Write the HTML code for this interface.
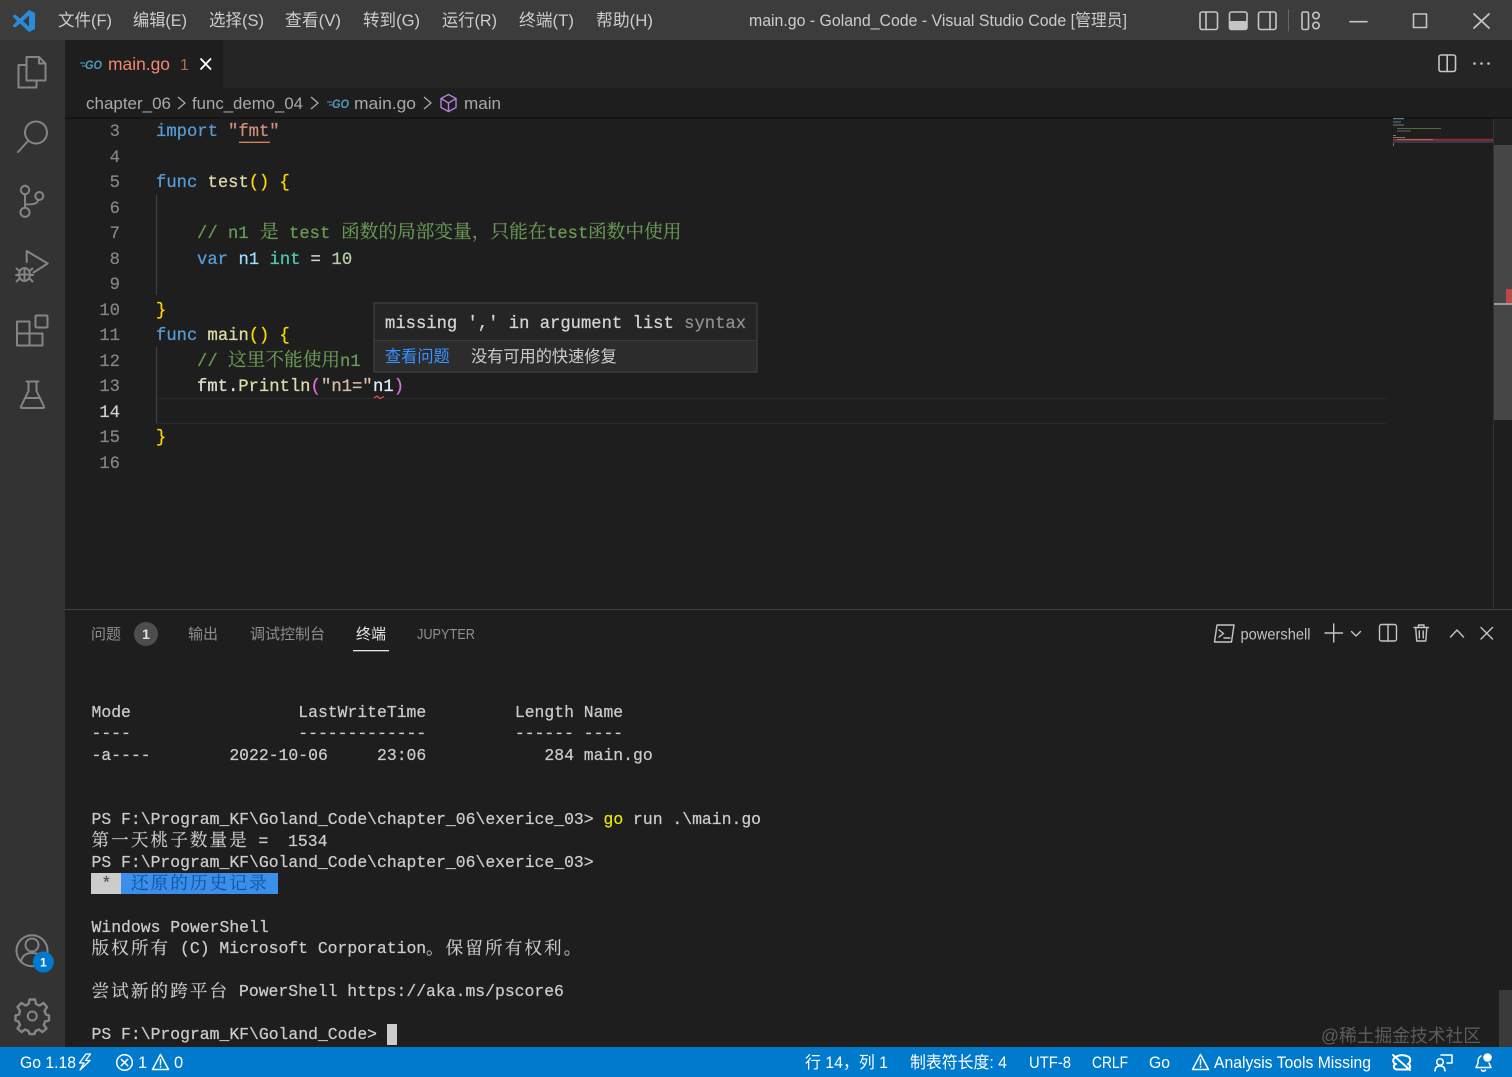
<!DOCTYPE html>
<html lang="zh">
<head>
<meta charset="utf-8">
<title>main.go - Goland_Code - Visual Studio Code</title>
<style>
html,body{margin:0;padding:0;background:#1e1e1e;width:1512px;height:1077px;overflow:hidden}
svg{display:block;position:absolute;left:0;top:0}
text{white-space:pre}
.ui{font-family:"Liberation Sans","Noto Sans CJK SC",sans-serif}
.m{font-family:"Liberation Mono","Noto Sans CJK SC",monospace;font-size:17.2px;stroke-width:.25px}
.t{font-family:"Liberation Mono","Noto Serif CJK SC",monospace;font-size:16.42px;fill:#cccccc;stroke:#cccccc;stroke-width:.22px}
.tc{font-family:"Noto Serif CJK SC","Noto Sans CJK SC",serif;font-size:17.6px;letter-spacing:2.08px;fill:#cccccc;stroke:#cccccc;stroke-width:.15px}
.cc{font-family:"Noto Serif CJK SC","Noto Sans CJK SC",serif;font-size:18.7px;fill:#6a9955;stroke:#6a9955;stroke-width:.15px}
.n{font-family:"Liberation Mono",monospace;font-size:17.2px;fill:#858585;stroke:#858585;stroke-width:.2px;text-anchor:end}
.menu{font-size:17px;fill:#cccccc}
.bc{font-size:17px;fill:#a9a9a9}
.pt{font-size:15px;fill:#8f8f8f}
.st{font-size:16.5px;fill:#ffffff}
.ic{fill:none;stroke:#858585;stroke-width:2;stroke-linejoin:round;stroke-linecap:round}
.tb{fill:none;stroke:#c5c5c5;stroke-width:1.6;stroke-linejoin:round;stroke-linecap:round}
.sw{fill:none;stroke:#ffffff;stroke-width:1.5;stroke-linejoin:round;stroke-linecap:round}
.k{fill:#569cd6;stroke:#569cd6}.f{fill:#dcdcaa;stroke:#dcdcaa}.y{fill:#ffd700;stroke:#ffd700}.s{fill:#ce9178;stroke:#ce9178}.v{fill:#9cdcfe;stroke:#9cdcfe}.i{fill:#4ec9b0;stroke:#4ec9b0}.w{fill:#d4d4d4;stroke:#d4d4d4}.d{fill:#b5cea8;stroke:#b5cea8}.g{fill:#6a9955;stroke:#6a9955}.p{fill:#da70d6;stroke:#da70d6}
.go{font-family:"Liberation Sans",sans-serif;font-size:12px;font-weight:700;font-style:italic;fill:#519aba}
</style>
</head>
<body>
<svg width="1512" height="1077" viewBox="0 0 1512 1077" xmlns="http://www.w3.org/2000/svg">
<!-- backgrounds -->
<rect x="0" y="0" width="1512" height="1077" fill="#1e1e1e"/>
<rect x="0" y="0" width="1512" height="40" fill="#3c3c3c"/>
<rect x="0" y="40" width="65" height="1007" fill="#333333"/>
<rect x="65" y="40" width="1447" height="48" fill="#252526"/>
<rect x="65" y="40" width="158" height="48" fill="#1e1e1e"/>
<rect x="65" y="117" width="1447" height="2" fill="#151515"/>
<rect x="0" y="1047" width="1512" height="30" fill="#007acc"/>

<!-- title bar -->
<path fill="#2b8bd8" fill-rule="evenodd" d="M29 10L20 18.5 15 14.5 12.5 16 17 21 12.5 26 15 27.5 20 23.5 29 32 35 29V13ZM29 15.5L23 21 29 26.5Z"/>
<g class="ui menu">
<text x="58" y="26" textLength="54" lengthAdjust="spacingAndGlyphs">文件(F)</text>
<text x="133" y="26" textLength="54" lengthAdjust="spacingAndGlyphs">编辑(E)</text>
<text x="209" y="26" textLength="55" lengthAdjust="spacingAndGlyphs">选择(S)</text>
<text x="285" y="26" textLength="56" lengthAdjust="spacingAndGlyphs">查看(V)</text>
<text x="363" y="26" textLength="57" lengthAdjust="spacingAndGlyphs">转到(G)</text>
<text x="442" y="26" textLength="55" lengthAdjust="spacingAndGlyphs">运行(R)</text>
<text x="519" y="26" textLength="55" lengthAdjust="spacingAndGlyphs">终端(T)</text>
<text x="596" y="26" textLength="57" lengthAdjust="spacingAndGlyphs">帮助(H)</text>
<text x="749" y="26" textLength="378" lengthAdjust="spacingAndGlyphs">main.go - Goland_Code - Visual Studio Code [管理员]</text>
</g>
<g class="tb">
<rect x="1200" y="12" width="17.5" height="17.5" rx="2"/><path d="M1206 12V29.5"/>
<rect x="1229.5" y="12" width="17.5" height="17.5" rx="2"/>
<rect x="1258.5" y="12" width="17.5" height="17.5" rx="2"/><path d="M1270 12V29.5"/>
<path d="M1288.5 10V31" stroke="#666" stroke-width="1"/>
<rect x="1302" y="12" width="6.5" height="17.5" rx="1.5"/>
<circle cx="1316" cy="15.5" r="3.2"/><circle cx="1316" cy="25.5" r="3.2"/>
<path d="M1350 21.7H1367"/>
<rect x="1413.5" y="14" width="13" height="13.5"/>
<path d="M1474 14L1489 28M1489 14L1474 28" stroke-width="1.8"/>
</g>
<rect x="1229.5" y="21" width="17.5" height="8.5" rx="1" fill="#c5c5c5"/>

<!-- tab -->
<path d="M80 63H85M82 66H86" stroke="#519aba" stroke-width="1"/>
<text class="go" x="85" y="69" textLength="17" lengthAdjust="spacingAndGlyphs">GO</text>
<text class="ui" x="108" y="70" font-size="17.5" fill="#f48771" textLength="62" lengthAdjust="spacingAndGlyphs">main.go</text>
<text class="ui" x="180" y="70" font-size="16" fill="#b8685a">1</text>
<path d="M200.500 58.500L211 69.500M211 58.500L200.500 69.500" stroke="#ffffff" stroke-width="1.800" fill="none"/>
<g class="tb">
<rect x="1439" y="55" width="16.500" height="16.500" rx="2"/><path d="M1447.200 55V71.500"/>
</g>
<circle cx="1474.500" cy="63.500" r="1.300" fill="#c5c5c5"/><circle cx="1481.500" cy="63.500" r="1.300" fill="#c5c5c5"/><circle cx="1488.500" cy="63.500" r="1.300" fill="#c5c5c5"/>

<!-- breadcrumbs -->
<g class="ui bc">
<text x="86" y="109" textLength="85" lengthAdjust="spacingAndGlyphs">chapter_06</text>
<text x="192" y="109" textLength="111" lengthAdjust="spacingAndGlyphs">func_demo_04</text>
<text x="354" y="109" textLength="62" lengthAdjust="spacingAndGlyphs">main.go</text>
<text x="464" y="109" textLength="37" lengthAdjust="spacingAndGlyphs">main</text>
</g>
<path d="M178 97L185 103 178 109M311 97L318 103 311 109M424 97L431 103 424 109" stroke="#a9a9a9" stroke-width="1.300" fill="none"/>
<path d="M327 102H332M329 105H333" stroke="#519aba" stroke-width="1"/>
<text class="go" x="332" y="108" textLength="17" lengthAdjust="spacingAndGlyphs">GO</text>
<path d="M448.500 94.500L456 98.500V107.500L448.500 111.500 441 107.500V98.500ZM441 98.500L448.500 103 456 98.500M448.500 103V111.500" fill="none" stroke="#b180d7" stroke-width="1.400" stroke-linejoin="round"/>

<!-- activity bar -->
<g class="ic">
<path d="M26 65H18.500V87.500H36.500V80.500"/>
<path d="M26.500 57H39L45.500 63.500V80.500H26.500ZM39 57V63.500H45.500"/>
<circle cx="36" cy="132.500" r="11"/><path d="M28 141L18 152"/>
<circle cx="25" cy="190" r="4.200"/><circle cx="39.300" cy="196" r="4"/><circle cx="25" cy="212.300" r="4.600"/>
<path d="M25 194.500V207.500M38 200.500C37 204 33 204.500 25 204.500"/>
<path d="M26.700 262V251L47.700 263.500 33.500 272.500"/>
<path d="M24.500 268a5.500 6.500 0 0 1 5.500 6.500a5.500 6.500 0 0 1-11 0a5.500 6.500 0 0 1 5.500-6.500ZM19 274.500H30M24.500 268V281M16.500 268.500L19.500 271M32.500 268.500L29.500 271M16 275H19M33 275H30M16.500 281.500L19.500 278.500M32.500 281.500L29.500 278.500"/>
<path d="M17 321.500H29.500V333.500H42.500V345.500H17ZM17 333.500H29.500V345.500"/>
<rect x="35.500" y="315.500" width="12" height="12" rx="1"/>
<path d="M26.500 381.500H38.500M28.500 381.500V391L21 406.500Q20.500 408 22 408H43Q44.500 408 44 406.500L36.500 391V381.500M25 398H40"/>
<circle cx="32" cy="950.700" r="15.500"/><circle cx="32" cy="945" r="6.500"/>
<path d="M21 962C22 955 27 953 32 953S42 955 43 960"/>
<path d="M29.500 999.500H35L36 1004 39.500 1005.500 43.500 1003 47 1007 44.500 1011 46 1014.500 49 1015.500V1020.500L45 1021.500 43.800 1025 46.500 1028.500 42.500 1032 39 1029.500 35.500 1031 34.500 1034H29.500L28.500 1031 25 1029.500 21.500 1032 17.500 1028.500 20 1025 18.500 1021.500 15.500 1020.500V1015.500L19 1014.500 20 1011 17.500 1007 21.500 1003 25.500 1005.500 28.500 1004Z" stroke-width="2.400"/>
<circle cx="32.300" cy="1016" r="4.500"/>
</g>
<circle cx="43.300" cy="962" r="10.500" fill="#007acc"/>
<text class="ui" x="43.300" y="966.500" font-size="12" font-weight="700" fill="#fff" text-anchor="middle">1</text>

<!-- editor -->
<path d="M156 398.500H1386M156 423.500H1386" stroke="#2a2a2a" stroke-width="1.300"/>
<path d="M156.500 195V295M156.500 347V423" stroke="#404040" stroke-width="1.200"/>
<g>
<text class="n" x="120" y="136">3</text>
<text class="n" x="120" y="162">4</text>
<text class="n" x="120" y="187">5</text>
<text class="n" x="120" y="213">6</text>
<text class="n" x="120" y="238">7</text>
<text class="n" x="120" y="264">8</text>
<text class="n" x="120" y="289">9</text>
<text class="n" x="120" y="315">10</text>
<text class="n" x="120" y="340">11</text>
<text class="n" x="120" y="366">12</text>
<text class="n" x="120" y="391">13</text>
<text class="n" x="120" y="417" style="fill:#d0d0d0;stroke:#d0d0d0">14</text>
<text class="n" x="120" y="442">15</text>
<text class="n" x="120" y="468">16</text>
</g>
<g class="m">
<text y="136"><tspan x="156" class="k">import</tspan><tspan x="228" class="s">"fmt"</tspan></text>
<text y="187"><tspan x="156" class="k">func</tspan><tspan x="207.500" class="f">test</tspan><tspan x="248.700" class="y">()</tspan><tspan x="279.500" class="y">{</tspan></text>
<text y="238"><tspan x="197" class="g">// n1</tspan></text>
<text y="238"><tspan x="289" class="g">test</tspan><tspan x="547" class="g">test</tspan></text>
<text y="264"><tspan x="197" class="k">var</tspan><tspan x="238.500" class="v">n1</tspan><tspan x="269.500" class="i">int</tspan><tspan x="310.500" class="w">=</tspan><tspan x="331.500" class="d">10</tspan></text>
<text y="315"><tspan x="156" class="y">}</tspan></text>
<text y="340"><tspan x="156" class="k">func</tspan><tspan x="207.500" class="f">main</tspan><tspan x="248.700" class="y">()</tspan><tspan x="279.500" class="y">{</tspan></text>
<text y="366"><tspan x="197" class="g">//</tspan><tspan x="340" class="g">n1</tspan></text>
<text y="391"><tspan x="197" fill="#e0e0d0" stroke="#e0e0d0">fmt.</tspan><tspan x="238.300" class="f">Println</tspan><tspan x="310.500" class="p">(</tspan><tspan x="321" fill="#d8c0a8" stroke="#d8c0a8">"n1="</tspan><tspan x="373" fill="#dfeeff" stroke="#dfeeff">n1</tspan><tspan x="393.700" class="p">)</tspan></text>
<text y="442"><tspan x="156" class="y">}</tspan></text>
</g>
<text class="cc" x="260" y="238">是</text>
<text class="cc" x="341" y="238">函数的局部变量，只能在</text>
<text class="cc" x="588" y="238">函数中使用</text>
<text class="cc" x="228" y="366">这里不能使用</text>
<path d="M239 142.300H270" stroke="#d9805f" stroke-width="1.300"/>
<path d="M374 398L377 396 380 398.500 384 396.500" stroke="#f14c4c" stroke-width="1.200" fill="none"/>

<!-- hover tooltip -->
<rect x="374" y="303" width="383" height="69" fill="#252526" stroke="#454545" stroke-width="1"/>
<rect x="374.500" y="340.500" width="382" height="31" fill="#2c2c2d"/>
<path d="M374.500 340.500H756.500" stroke="#3a3a3a"/>
<g class="m">
<text x="385" y="328" fill="#d4d4d4" stroke="#d4d4d4">missing ',' in argument list <tspan fill="#8f8f8f" stroke="#8f8f8f">syntax</tspan></text>
</g>
<text class="ui" x="385" y="362" font-size="16.200" fill="#3794ff">查看问题</text>
<text class="ui" x="471" y="362" font-size="16.200" fill="#cccccc">没有可用的快速修复</text>

<!-- minimap -->
<g>
<rect x="1393" y="118" width="11" height="1.200" fill="#5e7d9c"/>
<rect x="1393" y="121.500" width="8" height="1" fill="#777"/>
<rect x="1393" y="124.500" width="11" height="1" fill="#777"/>
<rect x="1397" y="128" width="44" height="1" fill="#56683f"/>
<rect x="1397" y="130.500" width="14" height="1" fill="#666"/>
<rect x="1393" y="135" width="3" height="1" fill="#887722"/>
<rect x="1393" y="137" width="12" height="1" fill="#777"/>
<rect x="1393" y="138.700" width="100" height="2.300" fill="#8b2730"/>
<rect x="1393" y="141" width="100" height="2" fill="#2f3a4a"/>
<rect x="1397" y="139" width="36" height="1" fill="#a86a50"/>
<rect x="1393" y="143" width="1" height="3" fill="#777"/>
</g>
<!-- editor scrollbar -->
<rect x="1493" y="119" width="19" height="26" fill="#232323"/>
<path d="M1493.500 119V609" stroke="#343434"/>
<rect x="1494" y="145" width="18" height="275" fill="#464646"/>
<rect x="1506" y="289" width="6" height="14" fill="#b8484c"/>
<rect x="1494" y="303" width="18" height="2" fill="#9a9a9a"/>

<!-- panel -->
<path d="M65 609.500H1512" stroke="#414141"/>
<g class="ui pt">
<text x="91" y="639">问题</text>
<text x="188" y="639">输出</text>
<text x="250" y="639">调试控制台</text>
<text x="356" y="639" style="fill:#e7e7e7">终端</text>
<text x="417" y="639" textLength="58" lengthAdjust="spacingAndGlyphs">JUPYTER</text>
</g>
<circle cx="146" cy="634" r="12" fill="#4d4d4d"/>
<text class="ui" x="146" y="639" font-size="14" font-weight="700" fill="#e0e0e0" text-anchor="middle">1</text>
<rect x="353" y="650" width="36" height="1.300" fill="#e7e7e7"/>
<g class="tb" style="stroke-width:1.400">
<path d="M1217 625H1234L1231.500 642H1214.500Z"/><path d="M1219 630L1223.500 633.500 1219 637M1224 638H1230"/>
<path d="M1325 633H1342.500M1333.700 624V642"/>
<path d="M1351.500 631.500L1356 636 1360.500 631.500"/>
<rect x="1379.500" y="624.500" width="17" height="16.500" rx="2"/><path d="M1388 624.500V641"/>
<path d="M1414 627.500H1428.500M1418.500 627.500V625H1424V627.500M1415.700 627.500L1416.700 641H1425.800L1426.800 627.500M1419.300 631V638M1423.200 631V638"/>
<path d="M1450.500 637L1457 630 1463.500 637"/>
<path d="M1481 627.500L1492.500 639M1492.500 627.500L1481 639"/>
</g>
<text class="ui" x="1240.500" y="639.500" font-size="16" fill="#c0c0c0" textLength="70" lengthAdjust="spacingAndGlyphs">powershell</text>

<!-- terminal -->
<rect x="91" y="873" width="30" height="21" fill="#cccccc"/>
<rect x="121" y="873" width="157" height="21" fill="#3b8eea"/>
<rect x="387" y="1024" width="10" height="21" fill="#cccccc"/>
<g class="t">
<text x="91.500" y="717">Mode                 LastWriteTime         Length Name</text>
<text x="91.500" y="738">----                 -------------         ------ ----</text>
<text x="91.500" y="760">-a----        2022-10-06     23:06            284 main.go</text>
<text x="91.500" y="824">PS F:\Program_KF\Goland_Code\chapter_06\exerice_03&gt; <tspan fill="#e5e510" stroke="#e5e510">go</tspan> run .\main.go</text>
<text x="258.500" y="846">=  1534</text>
<text x="91.500" y="867">PS F:\Program_KF\Goland_Code\chapter_06\exerice_03&gt;</text>
<text x="101.500" y="888" style="fill:#555;stroke:#555">*</text>
<text x="91.500" y="932">Windows PowerShell</text>
<text x="180" y="953">(C) Microsoft Corporation</text>
<text x="239" y="996">PowerShell https://aka.ms/pscore6</text>
<text x="91.500" y="1039">PS F:\Program_KF\Goland_Code&gt;</text>
</g>
<text class="tc" x="91.500" y="846">第一天桃子数量是</text>
<text class="tc" x="131" y="889" style="fill:#15579f;stroke:#15579f">还原的历史记录</text>
<text class="tc" x="91.500" y="954">版权所有</text>
<text class="tc" x="426" y="954">。保留所有权利。</text>
<text class="tc" x="91.500" y="997">尝试新的跨平台</text>
<rect x="1499" y="990" width="13" height="57" fill="#3a3a3a"/>
<text class="ui" x="1321" y="1042" font-size="18" fill="#5c5c5c" textLength="160" lengthAdjust="spacingAndGlyphs">@稀土掘金技术社区</text>

<!-- status bar -->
<g class="ui st">
<text x="20" y="1068" textLength="56" lengthAdjust="spacingAndGlyphs">Go 1.18</text>
<text x="138" y="1068">1</text>
<text x="174" y="1068">0</text>
<text x="805" y="1068" textLength="83" lengthAdjust="spacingAndGlyphs">行 14，列 1</text>
<text x="910" y="1068" textLength="97" lengthAdjust="spacingAndGlyphs">制表符长度: 4</text>
<text x="1029" y="1068" textLength="42" lengthAdjust="spacingAndGlyphs">UTF-8</text>
<text x="1092" y="1068" textLength="36" lengthAdjust="spacingAndGlyphs">CRLF</text>
<text x="1149" y="1068" textLength="21" lengthAdjust="spacingAndGlyphs">Go</text>
<text x="1214" y="1068" textLength="157" lengthAdjust="spacingAndGlyphs">Analysis Tools Missing</text>
</g>
<g class="sw">
<path d="M86 1054L79.500 1063H84L80 1070 90 1060.500H85.500L90.500 1054Z" stroke-width="1.300"/>
<circle cx="124.500" cy="1062.500" r="7.800"/><path d="M121.300 1059.300L127.700 1065.700M127.700 1059.300L121.300 1065.700"/>
<path d="M160.500 1054.500L168.500 1069.500H152.500ZM160.500 1059.500V1064.500M160.500 1066.500V1067"/>
<path d="M1200.500 1054.500L1208.500 1069.500H1192.500ZM1200.500 1059.500V1064.500M1200.500 1066.500V1067"/>
<path d="M1393 1055L1410 1070" stroke-width="2"/>
<path d="M1395 1057.500C1392 1060 1393 1063 1396 1064 1393 1065 1393 1069 1397 1069.500H1407C1411 1069 1411 1065 1408 1064 1411 1062 1411 1058 1408 1056.500 1404 1054.500 1399 1054.500 1395 1057.500Z" stroke-width="2"/>
<path d="M1441 1055H1452V1063H1447"/>
<circle cx="1440" cy="1062" r="3.300"/><path d="M1435 1071C1435 1067 1437.500 1066 1440 1066S1445 1067 1445 1071"/>
<path d="M1481 1056C1478 1058 1478 1060 1478 1063L1476 1067.500H1491L1489 1063M1481.500 1070C1482 1071.500 1485 1071.500 1485.500 1070"/>
</g>
<circle cx="1487.500" cy="1057.500" r="4.300" fill="#ffffff"/>
</svg>
</body>
</html>
